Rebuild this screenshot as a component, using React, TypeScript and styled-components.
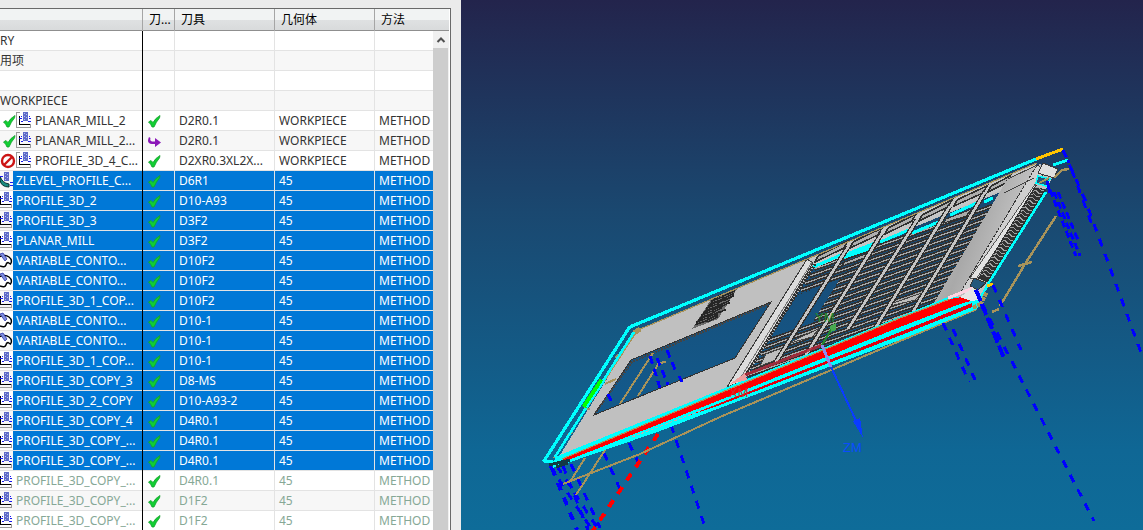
import React from "react";
import styled, { createGlobalStyle, css } from "styled-components";

const GlobalStyle = createGlobalStyle`
  * { box-sizing: border-box; }
  body {
    margin: 0;
    overflow: hidden;
    background: #ebebeb;
    font-family: "Noto Sans", "Noto Sans CJK SC", sans-serif;
    font-size: 12px;
    color: #333;
  }
`;

const Shell = styled.div`
  display: grid;
  grid-template-columns: 461px minmax(0, 1fr);
  height: 100vh;
`;

const Navigator = styled.section`
  padding: 8px 10px 0 0;
  overflow: hidden;
  background: #ebebeb;
`;

const TreeFrame = styled.div`
  position: relative;
  height: 100%;
  overflow: hidden;
  background: #fff;
  border-top: 1px solid #696969;
  border-right: 1px solid #696969;
  padding-right: 1px;
`;

const Table = styled.table`
  width: 100%;
  table-layout: fixed;
  border-collapse: separate;
  border-spacing: 0;
`;

const HeadCell = styled.th`
  height: 22px;
  padding: 0 0 0 6px;
  overflow: hidden;
  white-space: nowrap;
  text-align: left;
  font-weight: 400;
  line-height: 20px;
  color: #000;
  background: linear-gradient(#f1f3f3 0 50%, #dfe1e2 50%, #d8dadb);
  box-shadow: inset 0 -1px #8f8f8f;
  border-right: 1px solid #a5a5a5;
  &:last-child { border-right: 0; }
`;

type Tone = "normal" | "selected" | "faded";

const Row = styled.tr<{ $tone: Tone }>`
  height: 20px;
  color: ${(p) => (p.$tone === "selected" ? "#fff" : p.$tone === "faded" ? "#86a896" : "#333")};
  &:nth-child(even) { background: #f7f7f7; }
`;

const Cell = styled.td<{ $selected: boolean }>`
  height: 20px;
  padding: 0 0 1px 4px;
  overflow: hidden;
  white-space: nowrap;
  line-height: 19px;
  box-shadow: inset 0 -1px #e3e3e3;
  border-right: 1px solid #e3e3e3;
  ${(p) => p.$selected && css`background: #0078d7;`}
  &:last-child { border-right: 0; }
`;

const NameCell = styled(Cell)`
  padding: 0 0 1px;
  border-right: 1px solid #000;
  background: transparent;
`;

const NameLine = styled.div`
  display: flex;
  align-items: center;
  height: 19px;
`;

const IconSlot = styled.span<{ $clipped: boolean }>`
  display: flex;
  flex: none;
  align-items: center;
  justify-content: flex-end;
  width: ${(p) => (p.$clipped ? 13 : 32)}px;
  height: 19px;
  overflow: hidden;
  svg { flex: none; }
`;

const Name = styled.span<{ $selected: boolean; $indented: boolean }>`
  flex: 1;
  padding-left: ${(p) => (p.$indented ? 3 : 0)}px;
  background: ${(p) => (p.$selected ? "#0078d7" : "transparent")};
`;

const ScrollBar = styled.div`
  position: absolute;
  top: 22px;
  right: 1px;
  bottom: 0;
  width: 16px;
  display: flex;
  flex-direction: column;
  background: #f0f0f0;
`;

const ScrollButton = styled.button`
  display: grid;
  place-items: center;
  height: 17px;
  padding: 0;
  border: 0;
  background: #f0f0f0;
`;

const ScrollThumb = styled.div`
  flex: 1;
  margin-right: 1px;
  background: #cdcdcd;
`;

const Viewport = styled.main`
  overflow: hidden;
  background: linear-gradient(#23244c, #1a4870 40%, #0f6795 85%, #0e6c99);
  svg { display: block; width: 100%; height: 100%; }
`;

const Check = () => (
  <svg width="14" height="14" viewBox="0 0 14 14" role="img" aria-label="OK">
    <path d="M1.5 8 4 6.5 6 8.5 Q8.5 4 13 1.5 L12.5 4 Q9 8 7 13 L5 13 Q4 10 1.5 8Z" fill="#10cf32" stroke="#14a02c" strokeWidth=".8" />
  </svg>
);

const Forbidden = () => (
  <svg width="16" height="16" viewBox="0 0 16 16" role="img" aria-label="Suppressed">
    <circle cx="8" cy="8" r="6" fill="#fff" stroke="#cc1414" strokeWidth="2.4" />
    <path d="M4 12 12 4" stroke="#cc1414" strokeWidth="2.4" />
  </svg>
);

const Reuse = () => (
  <svg width="14" height="14" viewBox="0 0 14 14" role="img" aria-label="Previous tool">
    <path d="M2 3Q-1 9.5 5 10H8V13L14 8.5 8 4V7.5H5Q2.500 7 3.500 4Z" fill="#8b18b8" />
  </svg>
);

const ToolBit = () => (
  <>
    <rect x="7" y="0" width="5" height="9" fill="#5f6cc8" />
    <path d="M8 1h1v1h-1zM10 2h1v1h-1zM8 4h1v1h-1zM10 5h1v1h-1zM8 7h1v1h-1z" fill="#b4bcf0" />
  </>
);

const MillIcon = ({ flip = false }: { flip?: boolean }) => (
  <svg width="16" height="17" viewBox="0 0 16 17" shapeRendering="crispEdges" aria-hidden="true">
    <path d={flip ? "M3 15.5H14.5V12" : "M4 .5H.5V15.5H14.5V12"} fill="none" stroke="#9a9a9a" />
    <path d="M3.500 4V12.500H14" fill="none" stroke="#000" strokeWidth="1" />
    <path d="M3 6.500H6M13 6.500H15M5 9.500H7M12 9.500H15M5 4.500H6M13 4.500H14" stroke="#1b1bf0" />
    <ToolBit />
  </svg>
);

const ZLevelIcon = () => (
  <svg width="16" height="17" viewBox="0 0 16 17" aria-hidden="true">
    <path d="M3 4Q5 11 12 12V15Q4 15 3 8Z" fill="#178a80" stroke="#05302c" />
    <path d="M3 4.5H6M13 10.5H16M13 13.5H16" stroke="#1b1bf0" />
    <ToolBit />
  </svg>
);

const ContourIcon = () => (
  <svg width="16" height="17" viewBox="0 0 16 17" aria-hidden="true">
    <path d="M2 5Q8 2 12 5Q16 8 13.5 12L11 10.5Q9 11 9 13Q8 16 3 14" fill="#fff" stroke="#000" strokeWidth="1.4" />
    <path d="M3 2 6 1 10 7 8 9Z" fill="#7f8fe0" stroke="#3038a8" strokeWidth=".8" />
  </svg>
);

type Kind = "group" | "mill" | "zlevel" | "contour";
interface Operation {
  name: string;
  kind: Kind;
  tone: Tone;
  state?: "ok" | "off";
  path?: "ok" | "reuse";
  tool?: string;
  geometry?: string;
}

const group = (name: string): Operation => ({ name, kind: "group", tone: "normal" });
const op = (name: string, tool: string, tone: Tone = "selected", kind: Kind = "mill"): Operation => ({
  name, tool, tone, kind, path: "ok", geometry: "45",
});

const operations: Operation[] = [
  group("RY"),
  group("用项"),
  group(""),
  group("WORKPIECE"),
  { name: "PLANAR_MILL_2", kind: "mill", tone: "normal", state: "ok", path: "ok", tool: "D2R0.1", geometry: "WORKPIECE" },
  { name: "PLANAR_MILL_2...", kind: "mill", tone: "normal", state: "ok", path: "reuse", tool: "D2R0.1", geometry: "WORKPIECE" },
  { name: "PROFILE_3D_4_C...", kind: "mill", tone: "normal", state: "off", path: "ok", tool: "D2XR0.3XL2X...", geometry: "WORKPIECE" },
  op("ZLEVEL_PROFILE_C...", "D6R1", "selected", "zlevel"),
  op("PROFILE_3D_2", "D10-A93"),
  op("PROFILE_3D_3", "D3F2"),
  op("PLANAR_MILL", "D3F2"),
  op("VARIABLE_CONTO...", "D10F2", "selected", "contour"),
  op("VARIABLE_CONTO...", "D10F2", "selected", "contour"),
  op("PROFILE_3D_1_COP...", "D10F2"),
  op("VARIABLE_CONTO...", "D10-1", "selected", "contour"),
  op("VARIABLE_CONTO...", "D10-1", "selected", "contour"),
  op("PROFILE_3D_1_COP...", "D10-1"),
  op("PROFILE_3D_COPY_3", "D8-MS"),
  op("PROFILE_3D_2_COPY", "D10-A93-2"),
  op("PROFILE_3D_COPY_4", "D4R0.1"),
  op("PROFILE_3D_COPY_...", "D4R0.1"),
  op("PROFILE_3D_COPY_...", "D4R0.1"),
  op("PROFILE_3D_COPY_...", "D4R0.1", "faded"),
  op("PROFILE_3D_COPY_...", "D1F2", "faded"),
  op("PROFILE_3D_COPY_...", "D1F2", "faded"),
];

const KindIcon = ({ kind, flip }: { kind: Kind; flip: boolean }) =>
  kind === "zlevel" ? <ZLevelIcon /> : kind === "contour" ? <ContourIcon /> : <MillIcon flip={flip} />;

const OperationRow = ({ item }: { item: Operation }) => {
  const selected = item.tone === "selected";
  const isGroup = item.kind === "group";
  return (
    <Row $tone={item.tone}>
      <NameCell $selected={false}>
        <NameLine>
          {!isGroup && (
            <IconSlot $clipped={!item.state}>
              {item.state === "ok" && <Check />}
              {item.state === "off" && <Forbidden />}
              <KindIcon kind={item.kind} flip={!item.state} />
            </IconSlot>
          )}
          <Name $selected={selected} $indented={!isGroup}>{item.name}</Name>
        </NameLine>
      </NameCell>
      <Cell $selected={selected}>
        <NameLine>{item.path === "ok" ? <Check /> : item.path === "reuse" ? <Reuse /> : null}</NameLine>
      </Cell>
      <Cell $selected={selected}>{item.tool}</Cell>
      <Cell $selected={selected}>{item.geometry}</Cell>
      <Cell $selected={selected}>{isGroup ? "" : "METHOD"}</Cell>
    </Row>
  );
};

const mix = (a: number, b: number, t: number) => a + (b - a) * t;

/* Slats of the grille: parallel lines between its left and right edges. */
const slats = Array.from({ length: 19 }, (_, i) => {
  const t = i / 17;
  return `M${mix(814, 738, t)} ${mix(269, 390, t)}L${mix(1004, 925, t)} ${mix(202, 324, t)}`;
}).join("");

/* Cross bars, each from the top rail down to the front edge. */
const bars = [
  [848, 247, 776, 362],
  [882, 233, 806, 355],
  [917, 220, 848, 329],
  [950, 206, 876, 327],
  [985, 192, 911, 315],
];
const barPath = bars.map(([a, b, c, d]) => `M${a} ${b}L${c} ${d}`).join("");

const pockets = [
  [815, 262, 844, 248],
  [850, 248, 878, 235],
  [885, 234, 912, 221],
  [919, 221, 948, 207],
  [954, 206, 983, 193],
  [988, 192, 1006, 183],
];
const pocketPath = pockets
  .map(([a, b, c, d]) => `M${a} ${b}Q${a + 2} ${b - 6} ${a + 7} ${b - 8}L${c + 4} ${d - 7}L${c} ${d}Z`)
  .join("");

/* Coils on the connector strip at the right end. */
const coils = Array.from({ length: 27 }, (_, i) => {
  const t = i / 27;
  const x = mix(1035, 979, t);
  const y = mix(188, 278, t);
  return `M${x} ${y}l3 -1l3 3l3 0`;
}).join("");

/* Engraved marks on the plate. */
const engraving = Array.from({ length: 12 }, (_, i) => {
  const t = i / 12;
  const x = mix(713, 693, t);
  const y = mix(299, 327, t);
  return `M${x} ${y}l${8 + (i % 3) * 2} -4l2 1l${12 - (i % 4)} -5`;
}).join("");

const PartView = () => (
  <svg viewBox="461 0 682 530" preserveAspectRatio="xMinYMin slice" shapeRendering="crispEdges" role="img" aria-label="Part with tool paths">
    <defs>
      <linearGradient id="sheen" x1="0" y1="0" x2="1" y2=".5">
        <stop offset="0" stopColor="#c4c4c4" />
        <stop offset=".5" stopColor="#a9a9a9" />
        <stop offset="1" stopColor="#d0d0d0" />
      </linearGradient>
      <linearGradient id="recess" gradientUnits="userSpaceOnUse" x1="0" y1="190" x2="0" y2="390">
        <stop offset="0" stopColor="#1b466e" />
        <stop offset="1" stopColor="#13598a" />
      </linearGradient>
      <clipPath id="grille">
        <path d="M813 268 1006 190 932 309 742 384Z" />
      </clipPath>
    </defs>

    {/* tool axis moves behind the part */}
    <g fill="none" stroke="#0000ff" strokeWidth="3" strokeDasharray="8 8">
      <path d="M671 425 704 524" />
      <path d="M629 443 640 466M604 453 622 494" />
      <path d="M550 466 592 530M557 466 600 532M563 466 588 530" />
      <path d="M571 464 600 528" />
      <path d="M552 468 577 530" strokeWidth="4" />
    </g>
    <path d="M658 434 592 532" stroke="#ff0000" strokeWidth="4" strokeDasharray="8 8" />
    <g fill="none" stroke="#a8935a" strokeWidth="2">
      <path d="M563 484 640 454 720 417 900 341 977 309" />
      <path d="M585 458 570 482M605 450 576 495" />
    </g>

    {/* plate */}
    <path d="M557 460 637 330 807 259 1040 164 1056 172 980 297 736 394Z" fill="#c0c0c0" />
    <path d="M594 415 631 360 771 302 735 358Z" fill="url(#recess)" stroke="#333" strokeWidth="1" />
    <path d="M596 412 632 362 769 304" fill="none" stroke="#444" strokeWidth="2" strokeDasharray="2 1" />
    <g fill="none">
      <path d="M653 353 620 404M666 362 659 363 638 396" stroke="#a8935a" strokeWidth="2" />
      <path d="M650 356 660 388M657 358 668 385M667 350 676 372M679 376 682 382" stroke="#0000ff" strokeWidth="3" strokeDasharray="8 5" />
      <path d="M608 394 611 401" stroke="#0000ff" strokeWidth="3" />
    </g>
    <path d="M712 298 737 289 718 319 692 329Z" fill="#6a6a6a" />
    <path d={engraving} fill="none" stroke="#262626" strokeWidth="1.5" />

    {/* grille */}
    <path d="M813 268 1006 190 932 309 742 384Z" fill="url(#recess)" />
    <g clipPath="url(#grille)" fill="none">
      <path d={slats} stroke="#303030" strokeWidth="4.4" />
      <path d={slats} stroke="#a6a6a6" strokeWidth="1.2" />
      <path d="M795 296 840 279 812 323 769 338Z" fill="url(#recess)" />
      <path d="M766 354 785 347 776 360 760 366ZM795 340 820 328 812 337 790 343ZM893 303 922 293 915 300 890 306Z" fill="#bdbdbd" stroke="#444" />
      <path d="M845 262 868 253 864 258 842 266Z" fill="#aaa" stroke="#333" />
      <path d="M946 219 972 209 966 216 944 223Z" fill="#aaa" stroke="#333" />
    </g>
    <path d="M807 259 1038 163 1006 188 815 268Z" fill="#c6c6c6" />
    <path d={pocketPath} fill="#aeaeae" stroke="#303030" strokeWidth="1.6" />
    <path d="M813 267 841 255M880 242 909 230M912 233 941 221M950 215 977 203M984 202 993 198" stroke="#00ffff" strokeWidth="3" />
    <path d="M848 252 876 241 871 250 843 259Z" fill="#00ffff" />
    <path d={barPath} fill="none" stroke="#303030" strokeWidth="5" />
    <path d={barPath} fill="none" stroke="#c4c4c4" strokeWidth="2.6" />
    <path d="M807 259 813 263 741 382 727 387Z" fill="#dcdcdc" stroke="#3a3a3a" />
    <path d="M815 264 743 380" stroke="#303030" strokeWidth="3" strokeDasharray="2 1" />
    <path d="M812 262 738 382" stroke="#777" />

    {/* right end of the housing */}
    <path d="M1008 178 1037 165 960 293 931 308Z" fill="url(#sheen)" />
    <path d="M1037 165 1046 170 973 287 960 293Z" fill="#cfcfcf" stroke="#333" strokeWidth="1" strokeDasharray="3 1" />
    <path d="M1036 183 1033 196 976 279 970 278Z" fill="#e2e2e2" stroke="#333" strokeWidth=".8" />
    <path d="M1035 186 1046 190 988 283 978 278Z" fill="#303030" />
    <path d={coils} fill="none" stroke="#a4a4a4" strokeWidth="1" />
    <path d="M974 278 986 283 978 290 970 286Z" fill="#24577b" stroke="#333" />
    <path d="M1043 163 1058 169 1054 178 1038 173Z" fill="#dedede" stroke="#3a3a3a" />
    <path d="M1038 176 1050 179 1046 186 1036 183Z" fill="#24577b" stroke="#00ffff" strokeWidth="1.5" />
    <path d="M1039 183 1049 178" stroke="#a8935a" strokeWidth="2" />
    <path d="M1008 179 1037 165M1004 193 1034 178" stroke="#444" />

    {/* trim along the outline */}
    <g fill="none" stroke="#a8935a">
      <path d="M638 330 807 259 1037 163" strokeWidth="1.2" />
      <path d="M636 332 554 458M616 379 605 384M615 357 622 353M590 409 584 408M567 435 573 432" strokeWidth="2" />
      <path d="M1056 216 1025 264 1000 306M1018 266 1032 262M992 312 999 309M1054 178 1062 170 1069 169" strokeWidth="2.4" />
    </g>
    <path d="M634 333 640 329" stroke="#a8935a" strokeWidth="5" />
    <g fill="none" stroke="#00ffff" strokeLinejoin="round">
      <path d="M560 463 544 461 629 328Q631 326 637 324L1036 159" strokeWidth="3.2" />
      <path d="M555 457 634 332" strokeWidth="2.6" />
      <path d="M1053 165 1068 160M1046 192 988 284 979 301" strokeWidth="2.6" />
    </g>
    <path d="M584 407 602 380" stroke="#00ff00" strokeWidth="5" />
    <path d="M587 407 604 381" stroke="#00ffff" strokeWidth="2" />
    <path d="M1036 159 1063 149" stroke="#ffc400" strokeWidth="3" />

    {/* front edge */}
    <path d="M555 457 720 390 948 297 981 298 977 309 900 340 720 408 660 431 553 468Z" fill="#00ffff" />
    <path d="M562 459 720 393 900 318 950 299 962 297 978 299 960 304 900 327 720 400 566 461Z" fill="#ff0000" />
    <path d="M562 459 720 393 900 318 950 299" fill="none" stroke="#a8935a" strokeWidth="1.2" />
    <path d="M690 415 720 403 900 332 972 303 972 307 900 335.5 720 405Z" fill="#e00010" />
    <path d="M632 437 700 411" stroke="#b9b0b0" strokeDasharray="3 2" />
    <path d="M549 465 570 460M556 467 568 463" stroke="#123a44" strokeWidth="3" />
    <path d="M948 298 973 288" stroke="#ffd3e2" strokeWidth="3" />
    <path d="M960 297 973 288 978 293 978 300 971 301Z" fill="#e6e6e6" />
    <path d="M987 286 993 284" stroke="#ffc400" strokeWidth="3" />
    <path d="M980 305 987 292M973 308 982 303" stroke="#a8935a" strokeWidth="4" strokeDasharray="4 1" />

    {/* tool axis moves in front of the part */}
    <g fill="none" stroke="#0000ff" strokeWidth="3" strokeDasharray="8 8">
      <path d="M1063 150 1086 202 1106 257 1143 358" />
      <path d="M1068 160 1094 230" strokeDashoffset="5" />
      <path d="M1050 190 1076 256M1054 192 1080 256M1058 192 1078 240" strokeDasharray="7 4" />
      <path d="M975 290 1094 521" />
      <path d="M976 290 1004 358" strokeWidth="4" strokeDasharray="12 3" />
      <path d="M993 285 1021 350" />
      <path d="M943 323 969 382M953 329 975 380" />
      <path d="M1047 181 1050 193" strokeDasharray="none" />
    </g>

    {/* machine coordinate system */}
    <path d="M822 345 745 375" stroke="#b02a3a" strokeWidth="3" opacity=".85" />
    <path d="M730 384 745 373 747 380Z" fill="#f0a0a0" />
    <path d="M822 345 832 328" stroke="#228b30" strokeWidth="2" />
    <path d="M830 326 836 323 836 330 831 332Z" fill="#48a850" />
    <path d="M822 345 831 367" stroke="#8c8cf0" strokeWidth="3" />
    <path d="M831 367 858 425" stroke="#0a3cff" strokeWidth="2" />
    <path d="M853 421 860 418 863 438Z" fill="#0a3cff" />
    <g fontFamily="Liberation Sans, sans-serif" fontSize="13">
      <text x="843" y="452" fill="#0a4cff">ZM</text>
      <text x="815" y="322" fill="#228b30">YM</text>
      <text x="729" y="397" fill="#e02828">XM</text>
    </g>
  </svg>
);

export default function App() {
  return (
    <Shell>
      <GlobalStyle />
      <Navigator aria-label="Operation navigator">
        <TreeFrame>
          <Table>
            <colgroup>
              <col style={{ width: 143 }} />
              <col style={{ width: 32 }} />
              <col style={{ width: 100 }} />
              <col style={{ width: 100 }} />
              <col />
            </colgroup>
            <thead>
              <tr>
                <HeadCell aria-label="名称" />
                <HeadCell>刀...</HeadCell>
                <HeadCell>刀具</HeadCell>
                <HeadCell>几何体</HeadCell>
                <HeadCell>方法</HeadCell>
              </tr>
            </thead>
            <tbody>
              {operations.map((item, i) => (
                <OperationRow key={i} item={item} />
              ))}
            </tbody>
          </Table>
          <ScrollBar>
            <ScrollButton aria-label="Scroll up">
              <svg width="10" height="8" viewBox="0 0 10 8" aria-hidden="true">
                <path d="M1.5 6 5 2.5 8.5 6" fill="none" stroke="#505050" strokeWidth="2" />
              </svg>
            </ScrollButton>
            <ScrollThumb />
          </ScrollBar>
        </TreeFrame>
      </Navigator>
      <Viewport>
        <PartView />
      </Viewport>
    </Shell>
  );
}
